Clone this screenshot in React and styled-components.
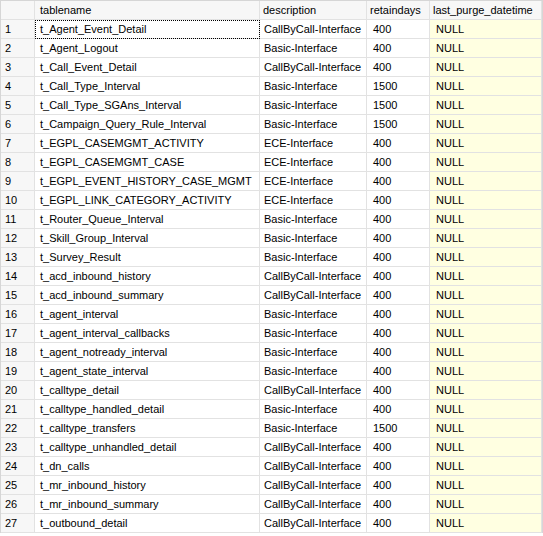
import React from "react";
import styled, { createGlobalStyle } from "styled-components";

const rows = [
  ["t_Agent_Event_Detail", "CallByCall-Interface", "400"],
  ["t_Agent_Logout", "Basic-Interface", "400"],
  ["t_Call_Event_Detail", "CallByCall-Interface", "400"],
  ["t_Call_Type_Interval", "Basic-Interface", "1500"],
  ["t_Call_Type_SGAns_Interval", "Basic-Interface", "1500"],
  ["t_Campaign_Query_Rule_Interval", "Basic-Interface", "1500"],
  ["t_EGPL_CASEMGMT_ACTIVITY", "ECE-Interface", "400"],
  ["t_EGPL_CASEMGMT_CASE", "ECE-Interface", "400"],
  ["t_EGPL_EVENT_HISTORY_CASE_MGMT", "ECE-Interface", "400"],
  ["t_EGPL_LINK_CATEGORY_ACTIVITY", "ECE-Interface", "400"],
  ["t_Router_Queue_Interval", "Basic-Interface", "400"],
  ["t_Skill_Group_Interval", "Basic-Interface", "400"],
  ["t_Survey_Result", "Basic-Interface", "400"],
  ["t_acd_inbound_history", "CallByCall-Interface", "400"],
  ["t_acd_inbound_summary", "CallByCall-Interface", "400"],
  ["t_agent_interval", "Basic-Interface", "400"],
  ["t_agent_interval_callbacks", "Basic-Interface", "400"],
  ["t_agent_notready_interval", "Basic-Interface", "400"],
  ["t_agent_state_interval", "Basic-Interface", "400"],
  ["t_calltype_detail", "CallByCall-Interface", "400"],
  ["t_calltype_handled_detail", "Basic-Interface", "400"],
  ["t_calltype_transfers", "Basic-Interface", "1500"],
  ["t_calltype_unhandled_detail", "CallByCall-Interface", "400"],
  ["t_dn_calls", "CallByCall-Interface", "400"],
  ["t_mr_inbound_history", "CallByCall-Interface", "400"],
  ["t_mr_inbound_summary", "CallByCall-Interface", "400"],
  ["t_outbound_detail", "CallByCall-Interface", "400"],
];

const Global = createGlobalStyle`
  body { margin: 0; background: #fff; font-family: "Liberation Sans", Arial, sans-serif; }
`;

const Grid = styled.div`
  width: 541px;
  border-left: 1px solid #d6d6d6;
  border-right: 1px solid #d6d6d6;
  border-top: 1px solid #d6d6d6;
`;

const Row = styled.div`
  display: grid;
  grid-template-columns: 34px 225px 107px 63px 1fr;
  height: 19px;
`;

const Cell = styled.div`
  display: flex;
  align-items: center;
  padding-left: ${(p) => p.$pad || 5}px;
  font-size: 11px;
  color: #000;
  white-space: nowrap;
  overflow: hidden;
  border-right: 1px solid #e2e2e2;
  border-bottom: 1px solid #e2e2e2;
  background: ${(p) => p.$bg || "#fff"};
  box-sizing: border-box;
  ${(p) => p.$focus && "outline: 1px dotted #000; outline-offset: -1px;"}
`;

export default function App() {
  return (
    <>
      <Global />
      <Grid>
        <Row>
          <Cell $bg="#f7f7f7" />
          <Cell $bg="#f7f7f7">tablename</Cell>
          <Cell $bg="#f7f7f7" $pad={3}>description</Cell>
          <Cell $bg="#f7f7f7" $pad={3}>retaindays</Cell>
          <Cell $bg="#f7f7f7" $pad={3}>last_purge_datetime</Cell>
        </Row>
        {rows.map((r, i) => (
          <Row key={i}>
            <Cell $bg="#f7f7f7" $pad={4}>{i + 1}</Cell>
            <Cell $focus={i === 0}>{r[0]}</Cell>
            <Cell $pad={4}>{r[1]}</Cell>
            <Cell $pad={6}>{r[2]}</Cell>
            <Cell $bg="#ffffe1" $pad={6}>NULL</Cell>
          </Row>
        ))}
      </Grid>
    </>
  );
}
